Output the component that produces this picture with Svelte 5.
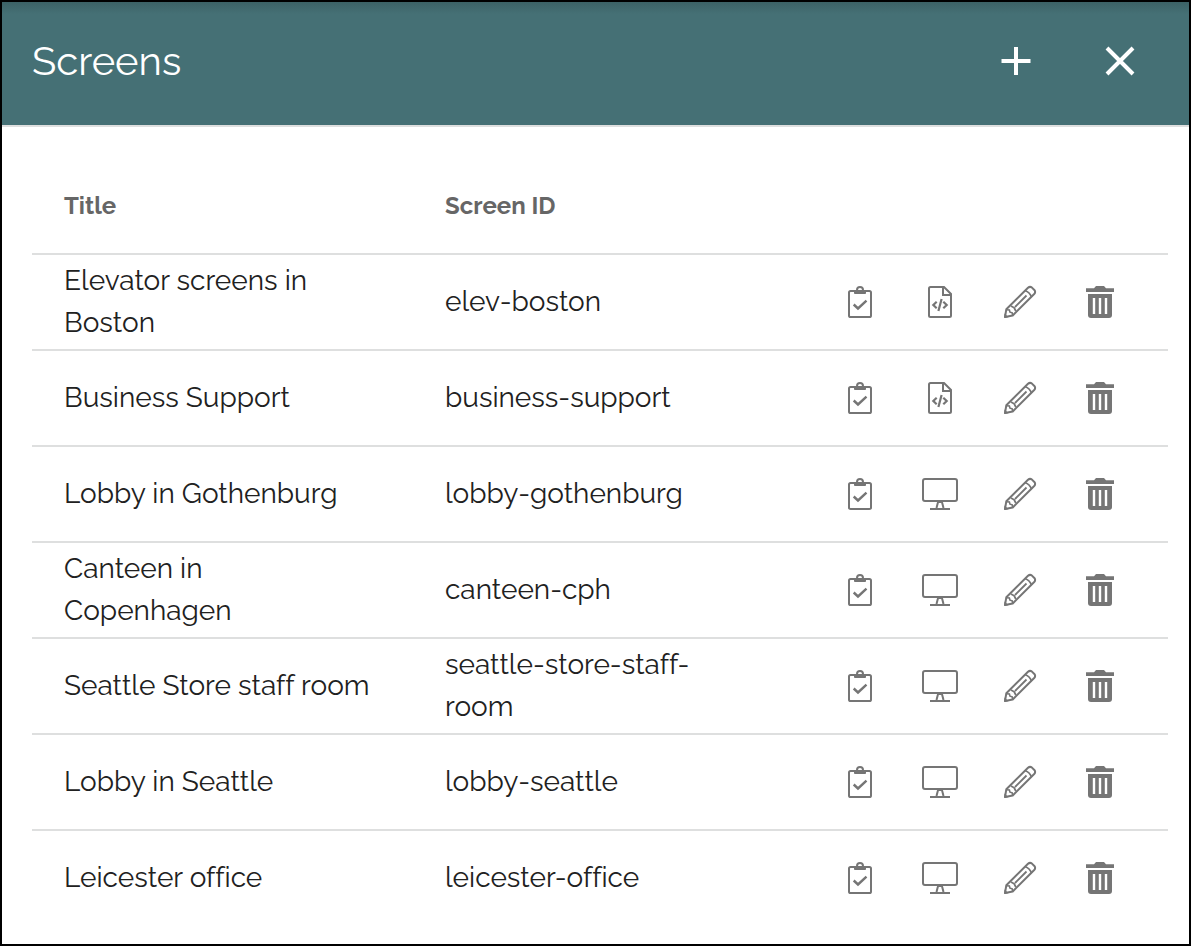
<script>
  const screens = [
    { title: 'Elevator screens in Boston', id: 'elev-boston', kind: 'code' },
    { title: 'Business Support', id: 'business-support', kind: 'code' },
    { title: 'Lobby in Gothenburg', id: 'lobby-gothenburg', kind: 'monitor' },
    { title: 'Canteen in Copenhagen', id: 'canteen-cph', kind: 'monitor' },
    { title: 'Seattle Store staff room', id: 'seattle-store-staff-room', kind: 'monitor' },
    { title: 'Lobby in Seattle', id: 'lobby-seattle', kind: 'monitor' },
    { title: 'Leicester office', id: 'leicester-office', kind: 'monitor' }
  ];
</script>

{#snippet icon(name)}
  <svg viewBox="0 0 40 40" width="40" height="40" fill="none" stroke="currentColor" stroke-width="2" aria-hidden="true">
    {#if name === 'clipboard'}
      <rect x="9" y="9" width="22" height="26" rx="1.6" />
      <path d="M14 9H26V11.2Q26 12 25 12H15Q14 12 14 11.2Z" fill="currentColor" stroke="none" />
      <path d="M17 10V8Q17 5 20 5T23 8V10" />
      <path d="M13.7 22.5L18 26.5L26.5 18.7" stroke-width="2.4" />
    {:else if name === 'code'}
      <path d="M24 5H10.5Q9 5 9 6.5V33.5Q9 35 10.5 35H29.5Q31 35 31 33.5V12Z" />
      <path d="M23 5V13H31" />
      <path d="M16.7 19.7L13.3 23L16.7 26.3M23.3 19.7L26.7 23L23.3 26.3M21.6 17L18.4 29" stroke-width="2.2" />
    {:else if name === 'monitor'}
      <rect x="3" y="5" width="34" height="22" rx="2" />
      <path d="M18.3 27L16.5 34M21.7 27L23.5 34" />
      <path d="M17 27H23V29H17Z" fill="currentColor" stroke="none" />
      <path d="M10 35H30" />
    {:else if name === 'pencil'}
      <path d="M5 35L6.3 27.3L28 5.8Q29.8 4.2 31.7 5.4L34.6 8.3Q35.8 10.2 34.2 12L12.7 33.5Z" stroke-linejoin="round" />
      <path d="M25 8.5Q29.8 10.2 31.5 15" stroke-width="1.8" />
      <path d="M6.6 27.8L9.4 28L10 30.2L12.2 30.8L12.6 33.4" stroke-width="1.6" />
      <path d="M15 25L26.5 13.5M11 24L14.2 25.8L15.8 29" stroke-width="1.8" />
      <path d="M4.5 31.5L8.5 35.2L4.2 36Z" fill="currentColor" stroke="none" />
    {:else}
      <path d="M6 6.2H14L16 4H24L26 6.2H34V10H6Z" fill="currentColor" stroke="none" />
      <path d="M8 12H32V33Q32 36 29 36H11Q8 36 8 33Z" fill="currentColor" stroke="none" />
      <path class="slots" d="M14 16V32M20 16V32M26 16V32" />
    {/if}
  </svg>
{/snippet}

<main class="panel">
  <header>
    <h1>Screens</h1>
    <div class="tools">
      <button type="button" aria-label="Add screen">
        <svg viewBox="0 0 40 40" width="40" height="40" fill="none" stroke="currentColor" stroke-width="4" aria-hidden="true"><path d="M20 6V34M5.5 20H34.5" /></svg>
      </button>
      <button type="button" aria-label="Close">
        <svg viewBox="0 0 40 40" width="40" height="40" fill="none" stroke="currentColor" stroke-width="4" aria-hidden="true"><path d="M7 7L33 33M33 7L7 33" /></svg>
      </button>
    </div>
  </header>
  <div class="content">
    <table>
      <thead>
        <tr><th class="title" scope="col">Title</th><th scope="col">Screen ID</th><td class="actions"></td></tr>
      </thead>
      <tbody>
        {#each screens as screen}
          <tr>
            <td class="title">{screen.title}</td>
            <td class="id">{screen.id}</td>
            <td class="actions">
              <div class="icons">
                <button type="button" aria-label="Check {screen.title}">{@render icon('clipboard')}</button>
                <button type="button" aria-label="View {screen.title}">{@render icon(screen.kind)}</button>
                <button type="button" aria-label="Edit {screen.title}">{@render icon('pencil')}</button>
                <button type="button" aria-label="Delete {screen.title}">{@render icon('trash')}</button>
              </div>
            </td>
          </tr>
        {/each}
      </tbody>
    </table>
  </div>
</main>

<style>
  :global(body) {
    margin: 0;
    background: #fff;
  }
  .panel {
    box-sizing: border-box;
    min-height: 100vh;
    border: 2px solid #000;
    color: #212121;
    font-family: Raleway, Lato, sans-serif;
    font-variant-ligatures: none;
  }
  header {
    display: flex;
    align-items: center;
    justify-content: space-between;
    padding: 29px 29px 34px 30px;
    border-bottom: 2px solid #dedfdf;
    background: linear-gradient(#3c6266, #457075 12px);
    color: #fff;
  }
  h1 {
    margin: 0;
    font-size: 40px;
    line-height: 60px;
    font-weight: 400;
  }
  .tools {
    display: flex;
    gap: 24px;
  }
  button {
    display: flex;
    align-items: center;
    justify-content: center;
    width: 80px;
    height: 60px;
    padding: 0;
    border: 0;
    background: none;
    color: inherit;
    cursor: pointer;
  }
  .content {
    padding: 30px 21px 16px 30px;
  }
  table {
    width: 100%;
    border-collapse: separate;
    border-spacing: 0;
    table-layout: fixed;
  }
  th,
  td {
    box-sizing: border-box;
    height: 96px;
    padding: 4px 32px;
    text-align: left;
    vertical-align: middle;
  }
  th {
    padding-top: 6px;
    color: #666;
    font-size: 24px;
    line-height: 32px;
    font-weight: 700;
  }
  td {
    font-size: 28px;
    line-height: 42px;
    font-weight: 400;
  }
  tbody td {
    border-top: 2px solid #dedfdf;
  }
  .title {
    width: 381px;
    padding-right: 42px;
  }
  .id {
    padding-right: 80px;
  }
  .actions {
    width: 348px;
    padding: 0 28px 0 0;
  }
  .icons {
    display: flex;
    color: #757575;
  }
  .slots {
    stroke: #fff;
    stroke-width: 2.4;
  }
</style>
